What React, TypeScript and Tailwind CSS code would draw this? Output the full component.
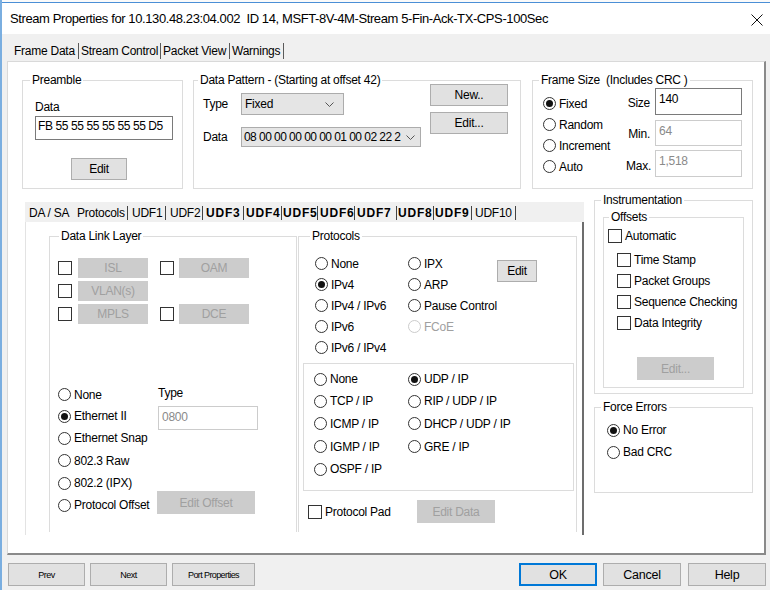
import React from 'react';

type Kids = { children?: React.ReactNode; className?: string };

const Group: React.FC<Kids & { title: string; tl: string }> = ({ title, tl, className = '', children }) => (
   <div className={`border border-[#dcdcdc] flex flex-col shrink-0 ${className}`}>
      <div className="h-0 shrink-0">
         <div className={`w-fit -translate-y-[8px] bg-white px-[2px] leading-[14px] whitespace-pre ${tl}`}>{title}</div>
      </div>
      {children}
   </div>
);

const Btn: React.FC<Kids & { disabled?: boolean }> = ({ children, className = '', disabled = false }) => (
   <button
      type="button"
      className={`flex items-center justify-center border shrink-0 whitespace-nowrap ${
         disabled ? 'bg-[#cccccc] border-[#cccccc] text-[#a0a0a0]' : 'bg-[#e1e1e1] border-[#adadad]'
      } ${className}`}
   >
      {children}
   </button>
);

const Radio: React.FC<{ label: string; checked?: boolean; disabled?: boolean; className?: string }> = ({
   label,
   checked,
   disabled,
   className = '',
}) => (
   <div className={`flex items-center ${className}`}>
      <span
         className={`w-[13px] h-[13px] rounded-full border bg-white flex items-center justify-center shrink-0 ${
            disabled ? 'border-[#cccccc]' : 'border-[#333333]'
         }`}
      >
         {checked && <span className="w-[7px] h-[7px] rounded-full bg-[#111111]" />}
      </span>
      <span className={`ml-[3px] whitespace-nowrap ${disabled ? 'text-[#a0a0a0]' : ''}`}>{label}</span>
   </div>
);

const Check: React.FC<{ label?: string; className?: string }> = ({ label, className = '' }) => (
   <div className={`flex items-center ${className}`}>
      <span className="w-[14px] h-[14px] border border-[#333333] bg-white shrink-0" />
      {label && <span className="ml-[3px] whitespace-nowrap">{label}</span>}
   </div>
);

const Chevron = () => (
   <svg width="9" height="5" viewBox="0 0 9 5" className="shrink-0">
      <polyline points="0.5,0.5 4.5,4.5 8.5,0.5" fill="none" stroke="#555" strokeWidth="1" />
   </svg>
);

const Select: React.FC<Kids> = ({ children, className = '' }) => (
   <div className={`flex items-center bg-[#e5e5e5] border border-[#acacac] pl-[3px] ${className}`}>
      <span className="flex-1 whitespace-nowrap">{children}</span>
      <Chevron />
   </div>
);

const Field: React.FC<Kids & { disabled?: boolean }> = ({ children, className = '', disabled }) => (
   <div
      className={`bg-white border pl-[3px] pt-[3px] whitespace-nowrap ${
         disabled ? 'border-[#cccccc] text-[#8a8a8a]' : 'border-[#7a7a7a]'
      } ${className}`}
   >
      {children}
   </div>
);

const mainTabs = [
   { label: 'Frame Data', w: 'w-[69px] pl-[4px]' },
   { label: 'Stream Control', w: 'w-[82px] pl-[2px]' },
   { label: 'Packet View', w: 'w-[69px] pl-[2px]' },
   { label: 'Warnings', w: 'w-[54px] pl-[2px]' },
];

const subTabs = [
   { label: 'DA / SA', w: 'w-[48px] pl-[4px]', bold: false, sep: false },
   { label: 'Protocols', w: 'w-[55px] pl-[4px]', bold: false, sep: true },
   { label: 'UDF1', w: 'w-[38px] pl-[4px]', bold: false, sep: true },
   { label: 'UDF2', w: 'w-[37px] pl-[4px]', bold: false, sep: true },
   { label: 'UDF3', w: 'w-[41px] pl-[3px]', bold: true, sep: true },
   { label: 'UDF4', w: 'w-[38px] pl-[2px]', bold: true, sep: true },
   { label: 'UDF5', w: 'w-[36px] pl-[1px]', bold: true, sep: true },
   { label: 'UDF6', w: 'w-[37px] pl-[2px]', bold: true, sep: true },
   { label: 'UDF7', w: 'w-[42px] pl-[2px]', bold: true, sep: true },
   { label: 'UDF8', w: 'w-[37px] pl-[1px]', bold: true, sep: true },
   { label: 'UDF9', w: 'w-[38px] pl-[1px]', bold: true, sep: true },
   { label: 'UDF10', w: 'w-[44px] pl-[3px]', bold: false, sep: true },
];

export default function App() {
   return (
      <div className="w-[770px] h-[590px] bg-[#f0f0f0] border-l-2 border-[#7aaee0] flex flex-col overflow-hidden font-['Liberation_Sans',Arial,sans-serif] text-[12px] tracking-[-0.25px] leading-[14px] text-black">
         <div className="h-[3px] shrink-0 bg-[#fafafa] border-b border-[#4b8fd6]" />

         {/* title bar */}
         <div className="h-[31px] shrink-0 bg-white flex items-start justify-between pt-[8px] pl-[8px] pr-[7px]">
            <span className="text-[13px] tracking-[-0.4px] leading-[16px] whitespace-pre">
               Stream Properties for 10.130.48.23:04.002  ID 14, MSFT-8V-4M-Stream 5-Fin-Ack-TX-CPS-100Sec
            </span>
            <svg width="12" height="12" viewBox="0 0 12 12" className="mt-[3px]">
               <path d="M0.5 0.5 L11.5 11.5 M11.5 0.5 L0.5 11.5" stroke="#111" strokeWidth="1" />
            </svg>
         </div>

         {/* main tabs */}
         <div className="h-[27px] shrink-0 flex items-end pl-[8px]">
            {mainTabs.map((t) => (
               <div key={t.label} className={`h-[16px] mb-[2px] leading-[16px] border-r border-[#5a5a5a] whitespace-nowrap ${t.w}`}>
                  {t.label}
               </div>
            ))}
         </div>

         {/* tab page */}
         <div className="ml-[5px] w-[759px] h-[494px] shrink-0 bg-white border border-[#d9d9d9] border-r-2 border-b-2 border-r-[#8a8a8a] border-b-[#8a8a8a] flex flex-col">
            <div className="flex mt-[18px] ml-[14px]">
               <Group title="Preamble" tl="ml-[7px]" className="w-[161px] h-[109px]">
                  <div className="mt-[19px] ml-[12px]">Data</div>
                  <Field className="mt-[2px] ml-[12px] w-[138px] h-[24px] !pl-[2px] !pt-[2px] tracking-[-0.4px]">FB 55 55 55 55 55 55 D5</Field>
                  <Btn className="mt-[18px] ml-[48px] w-[56px] h-[22px]">Edit</Btn>
               </Group>

               <Group title="Data Pattern - (Starting at offset 42)" tl="ml-[4px]" className="ml-[10px] w-[328px] h-[109px]">
                  <div className="flex">
                     <div className="w-[236px] pl-[9px] pt-[12px] flex flex-col">
                        <div className="flex items-center h-[22px]">
                           <span className="w-[38px]">Type</span>
                           <Select className="w-[103px] h-[22px] pr-[9px]">Fixed</Select>
                        </div>
                        <div className="flex items-center h-[20px] mt-[12px]">
                           <span className="w-[38px]">Data</span>
                           <Select className="w-[180px] h-[20px] pr-[5px] !pl-[2px] tracking-[-0.55px]">08 00 00 00 00 00 01 00 02 22 2</Select>
                        </div>
                     </div>
                     <div className="pt-[3px] flex flex-col gap-[6px]">
                        <Btn className="w-[78px] h-[22px]">New..</Btn>
                        <Btn className="w-[78px] h-[22px]">Edit...</Btn>
                     </div>
                  </div>
               </Group>

               <Group title="Frame Size  (Includes CRC )" tl="ml-[6px]" className="ml-[11px] w-[221px] h-[109px]">
                  <div className="flex">
                     <div className="ml-[10px] mt-[12px] w-[83px] flex flex-col">
                        <Radio label="Fixed" checked className="h-[21px]" />
                        <Radio label="Random" className="h-[21px]" />
                        <Radio label="Increment" className="h-[21px]" />
                        <Radio label="Auto" className="h-[21px]" />
                     </div>
                     <div className="mt-[7px] flex flex-col">
                        <div className="flex items-center">
                           <span className="w-[29px] pr-[5px] text-right mt-[2px]">Size</span>
                           <Field className="w-[87px] h-[27px]">140</Field>
                        </div>
                        <div className="flex items-center mt-[5px]">
                           <span className="w-[29px] pr-[5px] text-right mt-[2px]">Min.</span>
                           <Field disabled className="w-[87px] h-[26px]">64</Field>
                        </div>
                        <div className="flex items-center mt-[4px]">
                           <span className="w-[29px] pr-[5px] text-right mt-[4px]">Max.</span>
                           <Field disabled className="w-[87px] h-[27px]">1,518</Field>
                        </div>
                     </div>
                  </div>
               </Group>
            </div>

            <div className="flex items-start mt-[11px] ml-[17px]">
               {/* protocol sub tabs */}
               <div className="mt-[2px] w-[559px] h-[333px] flex flex-col shrink-0">
                  <div className="h-[20px] shrink-0 bg-[#f0f0f0] flex items-end">
                     {subTabs.map((t) => (
                        <div
                           key={t.label}
                           className={`h-[14px] mb-[2px] leading-[14px] whitespace-nowrap ${t.w} ${t.sep ? 'border-r border-[#444444]' : ''} ${
                              t.bold ? 'font-bold tracking-[0.8px]' : ''
                           }`}
                        >
                           {t.label}
                        </div>
                     ))}
                  </div>
                  <div className="flex-1 bg-white border-l border-[#e3e3e3] border-r-2 border-r-[#6d6d6d] flex items-start pl-[23px] pt-[14px] gap-[1px]">
                     <Group title="Data Link Layer" tl="ml-[9px]" className="w-[248px] h-[296px] border-b-0">
                        <div className="mt-[21px] ml-[8px] flex flex-col gap-[3px]">
                           <div className="flex items-center h-[20px]">
                              <Check />
                              <Btn disabled className="ml-[6px] w-[70px] h-[20px]">ISL</Btn>
                              <Check className="ml-[12px]" />
                              <Btn disabled className="ml-[5px] w-[70px] h-[20px]">OAM</Btn>
                           </div>
                           <div className="flex items-center h-[20px]">
                              <Check />
                              <Btn disabled className="ml-[6px] w-[70px] h-[20px]">VLAN(s)</Btn>
                           </div>
                           <div className="flex items-center h-[20px]">
                              <Check />
                              <Btn disabled className="ml-[6px] w-[70px] h-[20px]">MPLS</Btn>
                              <Check className="ml-[12px]" />
                              <Btn disabled className="ml-[5px] w-[70px] h-[20px]">DCE</Btn>
                           </div>
                        </div>
                        <div className="mt-[60px] ml-[8px] flex">
                           <div className="w-[100px] flex flex-col">
                              <Radio label="None" className="h-[21px]" />
                              <Radio label="Ethernet II" checked className="h-[22px]" />
                              <Radio label="Ethernet Snap" className="h-[22px]" />
                              <Radio label="802.3 Raw" className="h-[23px]" />
                              <Radio label="802.2 (IPX)" className="h-[22px]" />
                              <Radio label="Protocol Offset" className="h-[22px]" />
                           </div>
                           <div className="flex flex-col">
                              <div className="h-[20px] leading-[18px]">Type</div>
                              <Field disabled className="mt-[2px] w-[100px] h-[24px]">0800</Field>
                              <Btn disabled className="mt-[61px] -ml-[1px] w-[98px] h-[23px]">Edit Offset</Btn>
                           </div>
                        </div>
                     </Group>

                     <Group title="Protocols" tl="ml-[11px]" className="w-[279px] h-[296px] border-b-0">
                        <div className="mt-[16px] pl-[16px] flex items-start">
                           <div className="w-[93px] flex flex-col">
                              <Radio label="None" className="h-[21px]" />
                              <Radio label="IPv4" checked className="h-[21px]" />
                              <Radio label="IPv4 / IPv6" className="h-[21px]" />
                              <Radio label="IPv6" className="h-[21px]" />
                              <Radio label="IPv6 / IPv4" className="h-[21px]" />
                           </div>
                           <div className="w-[89px] flex flex-col">
                              <Radio label="IPX" className="h-[21px]" />
                              <Radio label="ARP" className="h-[21px]" />
                              <Radio label="Pause Control" className="h-[21px]" />
                              <Radio label="FCoE" disabled className="h-[21px]" />
                           </div>
                           <Btn className="mt-[7px] w-[40px] h-[22px]">Edit</Btn>
                        </div>
                        <div className="mt-[5px] ml-[4px] w-[271px] h-[128px] border border-[#dcdcdc] pt-[4px] pl-[10px] flex items-start">
                           <div className="w-[94px] flex flex-col">
                              <Radio label="None" className="h-[22px]" />
                              <Radio label="TCP / IP" className="h-[22px]" />
                              <Radio label="ICMP / IP" className="h-[23px]" />
                              <Radio label="IGMP / IP" className="h-[23px]" />
                              <Radio label="OSPF / IP" className="h-[22px]" />
                           </div>
                           <div className="flex flex-col">
                              <Radio label="UDP / IP" checked className="h-[22px]" />
                              <Radio label="RIP / UDP / IP" className="h-[22px]" />
                              <Radio label="DHCP / UDP / IP" className="h-[23px]" />
                              <Radio label="GRE / IP" className="h-[23px]" />
                           </div>
                        </div>
                        <div className="mt-[9px] pl-[9px] flex items-center h-[23px]">
                           <div className="w-[108px] flex items-center">
                              <Check label="Protocol Pad" />
                           </div>
                           <Btn disabled className="ml-[1px] w-[78px] h-[23px]">Edit Data</Btn>
                        </div>
                     </Group>
                  </div>
               </div>

               {/* right column */}
               <div className="ml-[10px] w-[159px] flex flex-col">
                  <Group title="Instrumentation" tl="ml-[6px]" className="h-[194px]">
                     <Group title="Offsets" tl="ml-[5px]" className="mt-[16px] ml-[8px] w-[141px] h-[171px]">
                        <Check label="Automatic" className="mt-[7px] ml-[4px] h-[21px]" />
                        <div className="mt-[3px] ml-[13px] flex flex-col">
                           <Check label="Time Stamp" className="h-[21px]" />
                           <Check label="Packet Groups" className="h-[21px]" />
                           <Check label="Sequence Checking" className="h-[21px]" />
                           <Check label="Data Integrity" className="h-[21px]" />
                        </div>
                        <Btn disabled className="mt-[24px] ml-[33px] w-[77px] h-[23px]">Edit...</Btn>
                     </Group>
                  </Group>
                  <Group title="Force Errors" tl="ml-[6px]" className="mt-[13px] h-[86px]">
                     <div className="mt-[11px] ml-[12px] flex flex-col">
                        <Radio label="No Error" checked className="h-[22px]" />
                        <Radio label="Bad CRC" className="h-[22px]" />
                     </div>
                  </Group>
               </div>
            </div>
         </div>

         {/* bottom buttons */}
         <div className="flex-1 flex items-start pt-[8px] pl-[6px] pr-[4px]">
            <Btn className="w-[77px] h-[23px] text-[9px] tracking-[-0.5px]">Prev</Btn>
            <Btn className="ml-[5px] w-[77px] h-[23px] text-[9px] tracking-[-0.5px]">Next</Btn>
            <Btn className="ml-[5px] w-[83px] h-[23px] text-[9px] tracking-[-0.6px]">Port Properties</Btn>
            <div className="flex-1" />
            <Btn className="w-[78px] h-[23px] !border-2 !border-[#0078d7] text-[12.5px]">OK</Btn>
            <Btn className="ml-[6px] w-[78px] h-[23px] text-[12.5px]">Cancel</Btn>
            <Btn className="ml-[7px] w-[78px] h-[23px] text-[12.5px]">Help</Btn>
         </div>
      </div>
   );
}
